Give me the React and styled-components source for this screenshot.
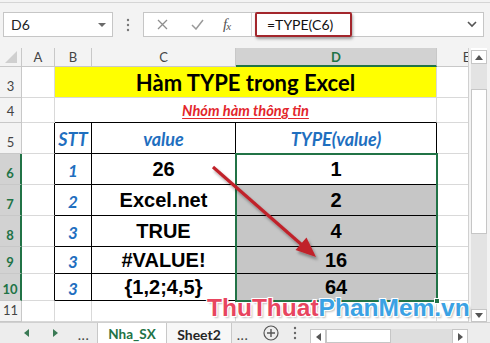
import React from 'react';
import styled, { createGlobalStyle } from 'styled-components';

const Global = createGlobalStyle`
  html, body { margin: 0; padding: 0; background: #fff; }
  body { width: 490px; height: 343px; overflow: hidden; }
  * { box-sizing: border-box; }
`;

const GREEN = '#217346';
const GRID = '#d9d9d9';
const BLUE = '#1f6fbf';

const Window = styled.div`
  position: relative;
  width: 490px;
  height: 343px;
  overflow: hidden;
  background: #f3f3f3;
  font-family: Lato, "Liberation Sans", sans-serif;
  display: flex;
  flex-direction: column;
`;

const RibbonEdge = styled.div`
  height: 3px;
  border-bottom: 1px solid #d5d5d5;
`;

const FormulaRow = styled.div`
  display: flex;
  align-items: stretch;
  height: 25px;
  margin: 9px 6px 11px 3px;
`;

const NameBox = styled.div`
  width: 110px;
  background: #fff;
  border: 1px solid #c6c6c6;
  display: flex;
  align-items: center;
  justify-content: space-between;
  padding: 0 6px 0 7px;
  font-size: 14px;
  color: #222;
`;

const DropTri = styled.span`
  width: 0;
  height: 0;
  border-left: 4px solid transparent;
  border-right: 4px solid transparent;
  border-top: 4px solid #6a6a6a;
`;

const Grip = styled.div`
  width: 30px;
  display: flex;
  align-items: center;
  justify-content: center;
`;

const FormulaBox = styled.div`
  flex: 1;
  display: flex;
  background: #fff;
  border: 1px solid #c6c6c6;
`;

const FxArea = styled.div`
  width: 108px;
  display: flex;
  align-items: center;
  padding-left: 13px;
  gap: 19px;
  border-right: 1px solid #d6d6d6;
`;

const Fx = styled.span`
  font-family: "Liberation Serif", serif;
  font-style: italic;
  font-size: 15px;
  color: #555;
  letter-spacing: -1px;
  & sub { font-size: 11px; vertical-align: -1px; }
`;

const InputArea = styled.div`
  flex: 1;
  display: flex;
  align-items: stretch;
  justify-content: space-between;
  padding: 0 6px 0 3px;
`;

const Highlight = styled.div`
  width: 97px;
  margin: -1px 0;
  border: 2px solid #a3262c;
  border-radius: 2px;
  box-shadow: 1px 2px 3px rgba(0, 0, 0, 0.35);
  display: flex;
  align-items: center;
  padding-left: 10px;
  font-size: 14px;
  color: #111;
`;

const Chevron = styled.div`
  display: flex;
  align-items: center;
`;

const SheetArea = styled.div`
  display: flex;
  height: 274px;
`;

const Grid = styled.div`
  position: relative;
  width: 469px;
  overflow: hidden;
  border-right: 1px solid #d0d0d0;
  background: #fff;
  display: grid;
  grid-template-columns: 22px 33px 37px 144px 201px 60px;
  grid-template-rows: 19px 31px 25px 31px 31px 31px 31px 27px 27px 21px;
`;

const Cell = styled.div`
  border-right: 1px solid ${p => (p.$edge ? '#000' : GRID)};
  border-bottom: 1px solid ${GRID};
  background: #fff;
`;

const Corner = styled.div`
  background: #f3f3f3;
  border-right: 1px solid #c8c8c8;
  border-bottom: 1px solid #c8c8c8;
  display: flex;
  align-items: flex-end;
  justify-content: flex-end;
  padding: 0 4px 3px 0;
`;

const ColHead = styled.div`
  background: ${p => (p.$sel ? '#d2d2d2' : '#f3f3f3')};
  border-right: 1px solid #c8c8c8;
  border-bottom: ${p => (p.$sel ? `2px solid ${GREEN}` : '1px solid #c8c8c8')};
  color: ${p => (p.$sel ? GREEN : '#444')};
  font-weight: ${p => (p.$sel ? 700 : 400)};
  font-size: 13px;
  display: flex;
  align-items: center;
  justify-content: center;
  padding-top: ${p => (p.$sel ? '1px' : '0')};
`;

const RowHead = styled.div`
  background: ${p => (p.$sel ? '#d2d2d2' : '#f3f3f3')};
  border-right: ${p => (p.$sel ? `2px solid ${GREEN}` : '1px solid #c8c8c8')};
  border-bottom: 1px solid #c8c8c8;
  color: ${p => (p.$sel ? GREEN : '#444')};
  font-weight: ${p => (p.$sel ? 700 : 400)};
  font-size: 13px;
  display: flex;
  align-items: flex-end;
  justify-content: center;
  padding-bottom: 3px;
`;

const Title = styled.div`
  grid-column: 3 / 6;
  background: #ffff00;
  border-right: 1px solid ${GRID};
  border-bottom: 1px solid ${GRID};
  display: flex;
  align-items: center;
  justify-content: center;
  font-weight: 700;
  font-size: 22px;
  color: #000;
  padding-top: 1px;
`;

const Subtitle = styled.div`
  grid-column: 3 / 6;
  background: #fff;
  border-right: 1px solid ${GRID};
  border-bottom: 1px solid #000;
  display: flex;
  align-items: center;
  justify-content: center;
  font-weight: 700;
  font-style: italic;
  font-size: 14.6px;
  color: #e3262c;
  text-decoration: underline;
  text-underline-offset: 2px;
`;

const TCell = styled.div`
  border-right: 1px solid #000;
  border-bottom: 1px solid #000;
  background: ${p => (p.$fill ? '#c6c6c6' : '#fff')};
  display: flex;
  align-items: center;
  justify-content: center;
  white-space: nowrap;
  color: ${p => (p.$blue ? BLUE : '#000')};
  font-family: ${p => (p.$blue ? 'Lato, "Liberation Sans", sans-serif' : '"Liberation Sans", Arial, sans-serif')};
  font-weight: 700;
  font-style: ${p => (p.$blue ? 'italic' : 'normal')};
  font-size: ${p => (p.$head ? '18px' : p.$blue ? '17px' : '20px')};
  padding-top: ${p => (p.$blue ? '2px' : '1px')};
`;

const Selection = styled.div`
  position: absolute;
  grid-column: 5 / 6;
  grid-row: 5 / 10;
  top: -1px;
  left: -1px;
  right: -1px;
  bottom: -1px;
  border: 2px solid ${GREEN};
  pointer-events: none;
`;

const FillHandle = styled.div`
  position: absolute;
  right: -4px;
  bottom: -4px;
  width: 6px;
  height: 6px;
  background: ${GREEN};
  border: 1px solid #fff;
`;

const VScroll = styled.div`
  width: 16px;
  margin-left: 2px;
  background: #fff;
  display: flex;
  flex-direction: column;
  padding-top: 2px;
`;

const ScrollBtn = styled.div`
  width: 16px;
  height: ${p => p.$h || 15}px;
  background: #fff;
  border: 1px solid #c6c6c6;
  display: flex;
  align-items: center;
  justify-content: center;
`;

const VTrack = styled.div`
  flex: 1;
  background: #e3e3e3;
  padding-top: 25px;
  padding-bottom: 75px;
  display: flex;
  flex-direction: column;
`;

const VThumb = styled.div`
  height: 145px;
  background: #fff;
  border: 1px solid #c6c6c6;
`;

const TabBar = styled.div`
  height: 21px;
  background: #ededed;
  border-top: 1px solid #d0d0d0;
  display: flex;
  align-items: stretch;
  font-size: 14px;
`;

const NavArea = styled.div`
  width: 97px;
  display: flex;
  align-items: center;
  padding-left: 24px;
  gap: 20px;
`;

const Ellipsis = styled.span`
  color: #444;
  font-size: 12px;
  letter-spacing: 1px;
  font-weight: 700;
  padding-top: 4px;
`;

const Tab = styled.div`
  width: ${p => p.$w}px;
  display: flex;
  align-items: center;
  justify-content: center;
  background: ${p => (p.$active ? '#fff' : '#f7f7f7')};
  border-right: 1px solid #c8c8c8;
  border-left: ${p => (p.$active ? '1px solid #c8c8c8' : 'none')};
  color: ${p => (p.$active ? GREEN : '#262626')};
  font-weight: 700;
  font-size: ${p => (p.$active ? '13.5px' : '14px')};
  padding-top: 2px;
`;

const TabTools = styled.div`
  display: flex;
  align-items: center;
  width: 78px;
  padding-left: 5px;
  gap: 14px;
`;

const HScroll = styled.div`
  width: 158px;
  margin-top: 6px;
  display: flex;
  align-items: stretch;
  background: #dedede;
`;

const HThumb = styled.div`
  width: 65px;
  background: #fff;
  border: 1px solid #c6c6c6;
`;

const HSpacer = styled.div`
  flex: 1;
`;

const Watermark = styled.div`
  position: absolute;
  left: 207px;
  top: 295px;
  font-family: "Liberation Sans", Arial, sans-serif;
  font-weight: 700;
  font-size: 24.5px;
  line-height: 25px;
  white-space: nowrap;
  text-shadow: 1px 1px 0 #fff, -1px -1px 0 #fff, 1px -1px 0 #fff, -1px 1px 0 #fff,
    2px 2px 2px rgba(0, 0, 0, 0.25);
  pointer-events: none;
`;

const WmPart = styled.span`
  color: ${p => p.$c};
`;

const Overlay = styled.svg`
  position: absolute;
  left: 0;
  top: 0;
  pointer-events: none;
`;

const data = [
  [6, '1', '26', '1'],
  [7, '2', 'Excel.net', '2'],
  [8, '3', 'TRUE', '4'],
  [9, '3', '#VALUE!', '16'],
  [10, '3', '{1,2;4,5}', '64'],
];

export default function App() {
  return (
    <Window>
      <Global />
      <RibbonEdge />
      <FormulaRow>
        <NameBox>
          <span>D6</span>
          <DropTri />
        </NameBox>
        <Grip>
          <svg width="4" height="14" viewBox="0 0 4 14">
            <circle cx="2" cy="2" r="1.2" fill="#777" />
            <circle cx="2" cy="7" r="1.2" fill="#777" />
            <circle cx="2" cy="12" r="1.2" fill="#777" />
          </svg>
        </Grip>
        <FormulaBox>
          <FxArea>
            <svg width="11" height="11" viewBox="0 0 11 11">
              <path d="M1 1 L10 10 M10 1 L1 10" stroke="#8e8e8e" strokeWidth="1.3" />
            </svg>
            <svg width="13" height="11" viewBox="0 0 13 11" style={{ marginLeft: 4 }}>
              <path d="M1 6 L5 10 L12 1" stroke="#9a9a9a" strokeWidth="1.5" fill="none" />
            </svg>
            <Fx>
              f<sub>x</sub>
            </Fx>
          </FxArea>
          <InputArea>
            <Highlight>=TYPE(C6)</Highlight>
            <Chevron>
              <svg width="10" height="7" viewBox="0 0 10 7">
                <path d="M1 1 L5 5 L9 1" stroke="#555" strokeWidth="1.6" fill="none" />
              </svg>
            </Chevron>
          </InputArea>
        </FormulaBox>
      </FormulaRow>

      <SheetArea>
        <Grid>
          <Corner>
            <svg width="12" height="12" viewBox="0 0 12 12">
              <polygon points="12,0 12,12 0,12" fill="#cfcfcf" />
            </svg>
          </Corner>
          <ColHead>A</ColHead>
          <ColHead>B</ColHead>
          <ColHead>C</ColHead>
          <ColHead $sel>D</ColHead>
          <ColHead>E</ColHead>

          <RowHead>3</RowHead>
          <Cell />
          <Title>Hàm TYPE trong Excel</Title>
          <Cell />

          <RowHead>4</RowHead>
          <Cell />
          <Subtitle>Nhóm hàm thông tin</Subtitle>
          <Cell />

          <RowHead>5</RowHead>
          <Cell $edge />
          <TCell $blue $head>STT</TCell>
          <TCell $blue $head>value</TCell>
          <TCell $blue $head>TYPE(value)</TCell>
          <Cell />

          {data.map(([r, stt, val, res], i) => (
            <React.Fragment key={r}>
              <RowHead $sel>{r}</RowHead>
              <Cell $edge />
              <TCell $blue>{stt}</TCell>
              <TCell>{val}</TCell>
              <TCell $fill={i > 0}>{res}</TCell>
              <Cell />
            </React.Fragment>
          ))}

          <RowHead>11</RowHead>
          <Cell />
          <Cell />
          <Cell />
          <Cell />
          <Cell />

          <Selection>
            <FillHandle />
          </Selection>
        </Grid>
        <VScroll>
          <ScrollBtn>
            <svg width="8" height="5" viewBox="0 0 8 5">
              <polygon points="0,5 8,5 4,0" fill="#555" />
            </svg>
          </ScrollBtn>
          <VTrack>
            <VThumb />
          </VTrack>
          <ScrollBtn $h={13}>
            <svg width="8" height="5" viewBox="0 0 8 5">
              <polygon points="0,0 8,0 4,5" fill="#555" />
            </svg>
          </ScrollBtn>
        </VScroll>
      </SheetArea>

      <TabBar>
        <NavArea>
          <svg width="5" height="8" viewBox="0 0 5 8">
            <polygon points="5,0 5,8 0,4" fill="#3a7a55" />
          </svg>
          <svg width="5" height="8" viewBox="0 0 5 8" style={{ marginLeft: 4 }}>
            <polygon points="0,0 0,8 5,4" fill="#3a7a55" />
          </svg>
          <Ellipsis>...</Ellipsis>
        </NavArea>
        <Tab $active $w={70}>Nha_SX</Tab>
        <Tab $w={65}>Sheet2</Tab>
        <TabTools>
          <Ellipsis>...</Ellipsis>
          <svg width="16" height="16" viewBox="0 0 16 16">
            <circle cx="8" cy="8" r="7" stroke="#555" strokeWidth="1.2" fill="none" />
            <path d="M8 4 V12 M4 8 H12" stroke="#555" strokeWidth="1.4" />
          </svg>
          <svg width="4" height="14" viewBox="0 0 4 14">
            <circle cx="2" cy="2" r="1.2" fill="#666" />
            <circle cx="2" cy="7" r="1.2" fill="#666" />
            <circle cx="2" cy="12" r="1.2" fill="#666" />
          </svg>
        </TabTools>
        <HScroll>
          <ScrollBtn $h={15}>
            <svg width="5" height="8" viewBox="0 0 5 8">
              <polygon points="5,0 5,8 0,4" fill="#555" />
            </svg>
          </ScrollBtn>
          <HThumb />
          <HSpacer />
          <ScrollBtn $h={15}>
            <svg width="5" height="8" viewBox="0 0 5 8">
              <polygon points="0,0 0,8 5,4" fill="#555" />
            </svg>
          </ScrollBtn>
        </HScroll>
      </TabBar>

      <Overlay width="490" height="343" viewBox="0 0 490 343">
        <defs>
          <filter id="sh" x="-20%" y="-20%" width="140%" height="140%">
            <feDropShadow dx="2" dy="3" stdDeviation="1.5" floodColor="#000" floodOpacity="0.35" />
          </filter>
        </defs>
        <g filter="url(#sh)">
          <line x1="213" y1="167" x2="302" y2="245" stroke="#c0222a" strokeWidth="3.2" />
          <polygon points="316,257 295.5,250 306.5,237.5" fill="#c0222a" />
        </g>
      </Overlay>

      <Watermark>
        <WmPart $c="#e8455f">ThuThuat</WmPart>
        <WmPart $c="#3ba2e4">PhanMem.vn</WmPart>
      </Watermark>
    </Window>
  );
}
